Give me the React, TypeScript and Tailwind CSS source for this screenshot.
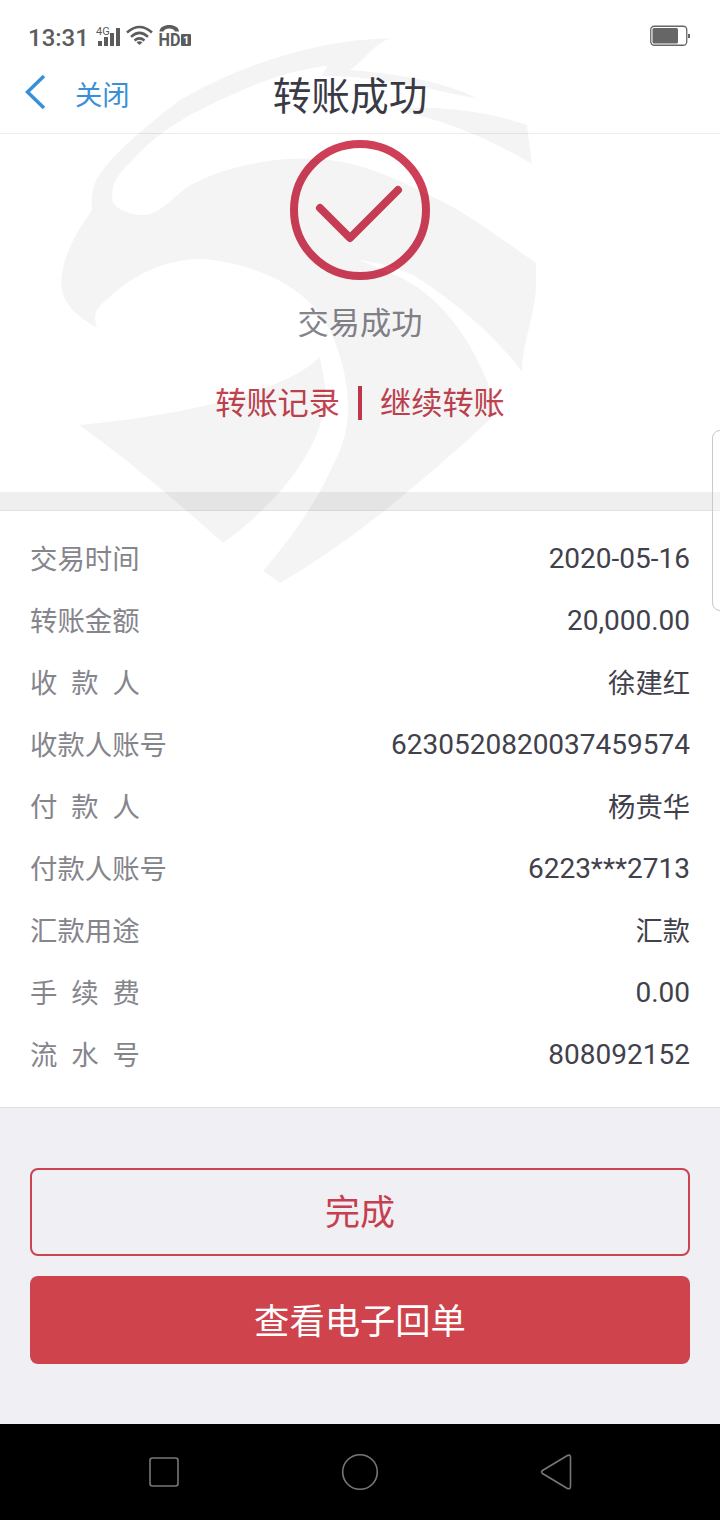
const rows = [
  { label: "交易时间", value: "2020-05-16" },
  { label: "转账金额", value: "20,000.00" },
  { label: "收款人", value: "徐建红", wide: true, cjk: true },
  { label: "收款人账号", value: "6230520820037459574" },
  { label: "付款人", value: "杨贵华", wide: true, cjk: true },
  { label: "付款人账号", value: "6223***2713" },
  { label: "汇款用途", value: "汇款", cjk: true },
  { label: "手续费", value: "0.00", wide: true },
  { label: "流水号", value: "808092152", wide: true },
];

function Watermark() {
  return (
    <svg
      className="absolute left-0 top-0 pointer-events-none"
      width="720"
      height="600"
      viewBox="0 0 720 600"
      fill="#000"
      fillOpacity="0.043"
    >
      {/* crest and head */}
      <path d="M392 38C310 40 235 68 180 100C143 128 112 155 97 178C92 188 91 200 92 210C72 238 62 260 61 283C62 303 75 315 97 328C94 318 94 310 103 303C130 277 160 260 200 259C250 262 290 283 310 303C325 317 335 337 343 367C352 410 349 435 333 465C315 505 292 537 263 571L280 583C355 540 430 475 497 413C485 360 445 290 385 271L360 260C378 263 395 267 413 275C450 298 495 335 522 372C523 340 534 320 536 287V263C500 238 460 208 433 197C400 180 365 164 330 160C275 154 220 168 187 187C170 200 165 209 147 215C132 216 117 210 113 202C109 185 120 172 130 163C150 140 175 120 227 97C260 82 290 70 327 66L322 76C380 76 430 89 478 99C450 84 405 74 350 70C368 58 372 44 392 38Z" />
      <path d="M400 108C440 106 490 112 527 125L532 164C500 145 450 120 400 112Z" />
      {/* beak */}
      <path d="M320 357C290 385 220 411 79 425C135 465 180 505 223 543C275 505 330 445 325 385Z" />
    </svg>
  );
}

function StatusBar() {
  return (
    <div className="flex h-14 items-start justify-between pl-7 pr-[29px] text-[#5c5c5c]">
      <div className="flex items-start pt-[22px]">
        <span className="w-[68px] font-[Roboto] text-[24px] font-medium leading-8">13:31</span>
        <svg className="overflow-visible" width="100" height="26" viewBox="96 22 100 26" fill="currentColor">
          <text x="96" y="35" fontSize="11" fontFamily="Roboto">4G</text>
          <path d="M98 41h4v5h-4zM104 37h4v9h-4zM110 33h4v13h-4zM116 28h4v18h-4z" />
          <g fill="none" stroke="currentColor" strokeWidth="2.5">
            <path d="M127 32.500Q139.500 21.500 152 32.500M131 36.800Q139.500 29 148 36.800M134.500 40.500Q139.500 36.300 144.500 40.500" />
          </g>
          <path d="M136.500 42.300Q139.500 40.300 142.500 42.300L139.500 45Z" />
          <path d="M159.500 31.500C159.500 22.800 179 22.800 179 31.500H175C174 27.500 164.500 27.500 163.500 31.500Z" />
          <g fontFamily="Roboto" fontWeight="700">
            <text x="158.500" y="46" fontSize="18" textLength="22" lengthAdjust="spacingAndGlyphs">HD</text>
            <rect x="181" y="34" width="10" height="12" rx="1" />
            <text x="183" y="44" fontSize="11" fill="#fff">1</text>
          </g>
        </svg>
      </div>
      <svg className="mt-[25px]" width="41" height="22" viewBox="0 0 41 22">
        <rect x="0.75" y="1.25" width="36" height="19" rx="3.5" fill="none" stroke="#666" strokeWidth="1.3" />
        <rect x="2.5" y="3" width="25.5" height="15.5" rx="1.5" fill="#666" />
        <rect x="38" y="9" width="2" height="4" fill="#666" />
      </svg>
    </div>
  );
}

function Header() {
  return (
    <header className="grid h-[78px] grid-cols-[1fr_auto_1fr] items-center border-b border-[#ececec]">
      <div className="flex items-center pl-6 text-[#3a8fd9]">
        <svg className="-mt-1.5" width="24" height="38" viewBox="0 0 24 38" fill="none" stroke="currentColor" strokeWidth="3.5">
          <path d="M20 3L3.500 19L20 35" />
        </svg>
        <span className="pl-[27px] pt-0.5 text-[27.3px] leading-9">关闭</span>
      </div>
      <h1 className="-ml-5 pt-[5px] text-[38.7px] leading-[56px] text-[#3a3a46]">转账成功</h1>
    </header>
  );
}

export default function App() {
  return (
    <div className="relative flex h-[1520px] w-[720px] flex-col overflow-hidden bg-white font-[Roboto,'Noto_Sans_CJK_SC',sans-serif]">
      <StatusBar />
      <Header />

      <section className="flex h-[358px] flex-col items-center pt-[6px]">
        <svg width="140" height="140" viewBox="0 0 140 140" fill="none" stroke="#cf3f58" strokeWidth="8">
          <circle cx="70" cy="70" r="66" />
          <path d="M30 68L60 98L108 50" strokeLinecap="round" strokeLinejoin="round" />
        </svg>
        <p className="mt-[21px] text-[31.2px] leading-[46px] text-[#85858c]">交易成功</p>
        <div className="mt-[34px] flex items-center text-[31.2px] leading-[46px] text-[#c44350]">
          <span>转账记录</span>
          <span className="mb-0.5 mx-[18px] h-[34px] w-1 bg-[#c8384d]" />
          <span>继续转账</span>
        </div>
      </section>

      <div className="h-[19px] border-b border-[#e2e2e2] bg-[#efefef]" />

      <dl className="flex h-[597px] flex-col border-b border-[#dedee0] pt-[17px]">
        {rows.map((row) => (
          <div key={row.label} className="flex h-[62px] items-center justify-between px-[30px]">
            <dt className="pt-1 text-[27.4px] text-[#85858c]">
              {row.wide ? (
                <span className="flex w-[110px] justify-between">
                  {row.label.split("").map((ch) => (
                    <span key={ch}>{ch}</span>
                  ))}
                </span>
              ) : (
                row.label
              )}
            </dt>
            <dd className={row.cjk ? "pt-0.5 text-[27.3px] text-[#41414c]" : "text-[28px] text-[#41414c]"}>
              {row.value}
            </dd>
          </div>
        ))}
      </dl>

      <div className="flex grow flex-col gap-5 bg-[#efeff4] px-[30px] pt-[60px]">
        <button className="h-[88px] rounded-lg border-2 border-[#cb4350] pt-1 text-[35px] text-[#c73f4e]">完成</button>
        <button className="h-[88px] rounded-lg bg-[#cf434d] pt-1 text-[35.3px] text-white">查看电子回单</button>
      </div>

      <nav className="flex h-24 items-center justify-between bg-black px-[148px]">
        <svg width="32" height="32" viewBox="0 0 32 32" fill="none" stroke="#777" strokeWidth="1.6">
          <rect x="2" y="2" width="28" height="28" rx="2.5" />
        </svg>
        <svg width="38" height="38" viewBox="0 0 38 38" fill="none" stroke="#777" strokeWidth="1.6">
          <circle cx="19" cy="19" r="17.3" />
        </svg>
        <svg width="32" height="38" viewBox="0 0 32 38" fill="none" stroke="#777" strokeWidth="1.6">
          <path d="M2.500 17.500L27 2.700Q30.500 1 30.500 4V33Q30.500 37 27 35.300L2.500 20.500Q0.500 19 2.500 17.500Z" />
        </svg>
      </nav>

      <Watermark />
      {/* edge panel handle */}
      <div className="absolute -right-3 top-[430px] h-[181px] w-5 rounded-lg border border-[#c9c9c9] bg-white/30" />
    </div>
  );
}
